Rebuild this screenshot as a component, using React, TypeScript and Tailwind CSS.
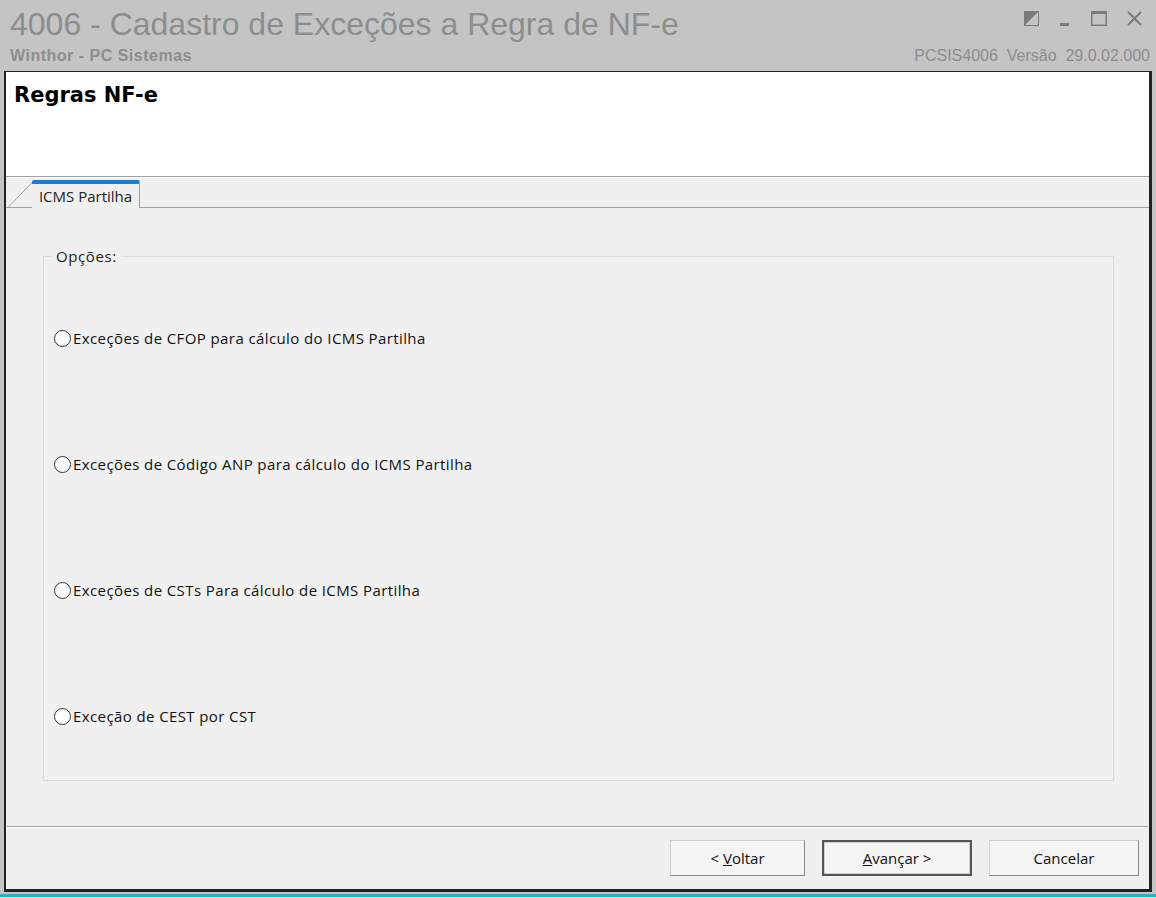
import React from "react";

const options = [
  "Exceções de CFOP para cálculo do ICMS Partilha",
  "Exceções de Código ANP para cálculo do ICMS Partilha",
  "Exceções de CSTs Para cálculo de ICMS Partilha",
  "Exceção de CEST por CST",
];

function Radio() {
  return <span className="inline-block w-[17px] h-[17px] rounded-full border border-[#333] bg-white shrink-0" />;
}

export default function App() {
  return (
    <div
      className="w-[1156px] h-[898px] bg-[#c4c4c4] flex flex-col overflow-hidden"
      style={{ fontFamily: '"Liberation Sans", Arial, sans-serif' }}
    >
      {/* Title area */}
      <div className="h-[71px] flex justify-between px-[10px] shrink-0">
        <div className="flex flex-col">
          <div className="text-[32px] leading-[36px] mt-[6px] text-[#8d8d8d]">
            4006 - Cadastro de Exceções a Regra de NF-e
          </div>
          <div className="text-[16px] leading-[18px] font-bold tracking-[0.5px] text-[#8d8d8d] mt-[5px]">Winthor - PC Sistemas</div>
        </div>
        <div className="flex flex-col items-end">
          <div className="flex items-center gap-[20px] mt-[11px] mr-[4px]">
            <svg width="15" height="15" viewBox="0 0 15 15">
              <rect x="0.5" y="0.5" width="14" height="14" fill="none" stroke="#7a7a7a" />
              <polygon points="1,1 14,1 1,14" fill="#7a7a7a" />
            </svg>
            <svg width="12" height="15" viewBox="0 0 12 15">
              <rect x="1" y="12" width="9" height="3" fill="#7a7a7a" />
            </svg>
            <svg width="16" height="15" viewBox="0 0 16 15">
              <rect x="0.75" y="0.75" width="14.5" height="13.5" fill="none" stroke="#7a7a7a" strokeWidth="1.5" />
              <rect x="0" y="0" width="16" height="3" fill="#7a7a7a" />
            </svg>
            <svg width="15" height="15" viewBox="0 0 15 15">
              <path d="M1 1 L14 14 M14 1 L1 14" stroke="#7a7a7a" strokeWidth="2" />
            </svg>
          </div>
          <div className="text-[16px] leading-[18px] text-[#8d8d8d] mt-[21px] -mr-[4px] whitespace-pre">PCSIS4006  Versão  29.0.02.000</div>
        </div>
      </div>

      {/* Window */}
      <div className="mx-[4px] h-[821px] border-l-[2px] border-t border-r-[3px] border-b-[3px] border-[#222] bg-[#f0f0f0] flex flex-col shrink-0">
        <div className="h-[105px] bg-white border-b border-[#a0a0a0] shrink-0">
          <div className="text-[21px] leading-[26px] font-bold text-black ml-[8px] mt-[10px]" style={{ fontFamily: '"DejaVu Sans", sans-serif' }}>
            Regras NF-e
          </div>
        </div>
        <div className="h-[1px] bg-white mx-[2px]" />

        {/* Tab strip */}
        <div className="relative h-[30px] shrink-0">
          <div className="absolute left-0 right-0 bottom-0 h-[1px] bg-[#a0a0a0]" />
          <svg className="absolute left-[2px] top-[3px]" width="26" height="27" viewBox="0 0 26 27">
            <line x1="0" y1="26.5" x2="25" y2="0.5" stroke="#a0a0a0" />
          </svg>
          <div className="absolute left-[26px] top-[2px] w-[108px] h-[28px] bg-[#f0f0f0] border-r border-[#a0a0a0] border-t-[4px] border-t-[#1e7bd0] rounded-t-[2px] flex items-center justify-center text-[15px] text-[#222]" style={{ fontFamily: '"Open Sans", sans-serif' }}>
            ICMS Partilha
          </div>
        </div>

        {/* Tab body */}
        <div className="flex-1 pl-[37px] pr-[35px] pt-[48px]">
          <div className="relative h-[525px] border border-[#dcdcdc]" style={{ fontFamily: '"Open Sans", sans-serif' }}>
            <span className="absolute left-[8px] -top-[11px] px-[4px] bg-[#f0f0f0] text-[15px] leading-[20px] tracking-[0.6px] text-[#222]">Opções:</span>
            <div className="flex flex-col pt-[73px] gap-[109px] pl-[10px]">
              {options.map((o) => (
                <div key={o} className="flex items-center gap-[2px] h-[17px] text-[15px] text-[#111] tracking-[0.4px]">
                  <Radio />
                  <span>{o}</span>
                </div>
              ))}
            </div>
          </div>
        </div>

        {/* Footer */}
        <div className="shrink-0">
          <div className="mx-[1px] h-[1px] bg-[#a0a0a0]" />
          <div className="mx-[1px] h-[1px] bg-white" />
          <div className="h-[61px] flex justify-end items-start pt-[12px] pr-[10px] gap-[17px] text-[15px] text-[#111]" style={{ fontFamily: '"Open Sans", sans-serif' }}>
            <button className="w-[135px] h-[36px] bg-[#f4f4f4] border border-[#cfcfcf] border-b-[#888] border-r-[#888]">
              &lt; <span className="underline">V</span>oltar
            </button>
            <button className="w-[150px] h-[36px] bg-[#f4f4f4] border-2 border-[#555] outline outline-1 outline-[#cfcfcf] -outline-offset-3">
              <span className="underline">A</span>vançar &gt;
            </button>
            <button className="w-[150px] h-[36px] bg-[#f4f4f4] border border-[#cfcfcf] border-b-[#888] border-r-[#888]">
              Cancelar
            </button>
          </div>
        </div>
      </div>

      <div className="h-[2px] shrink-0" />
      <div className="h-[3px] bg-[#1fb5cf] shrink-0" />
      <div className="flex-1 bg-white" />
    </div>
  );
}
